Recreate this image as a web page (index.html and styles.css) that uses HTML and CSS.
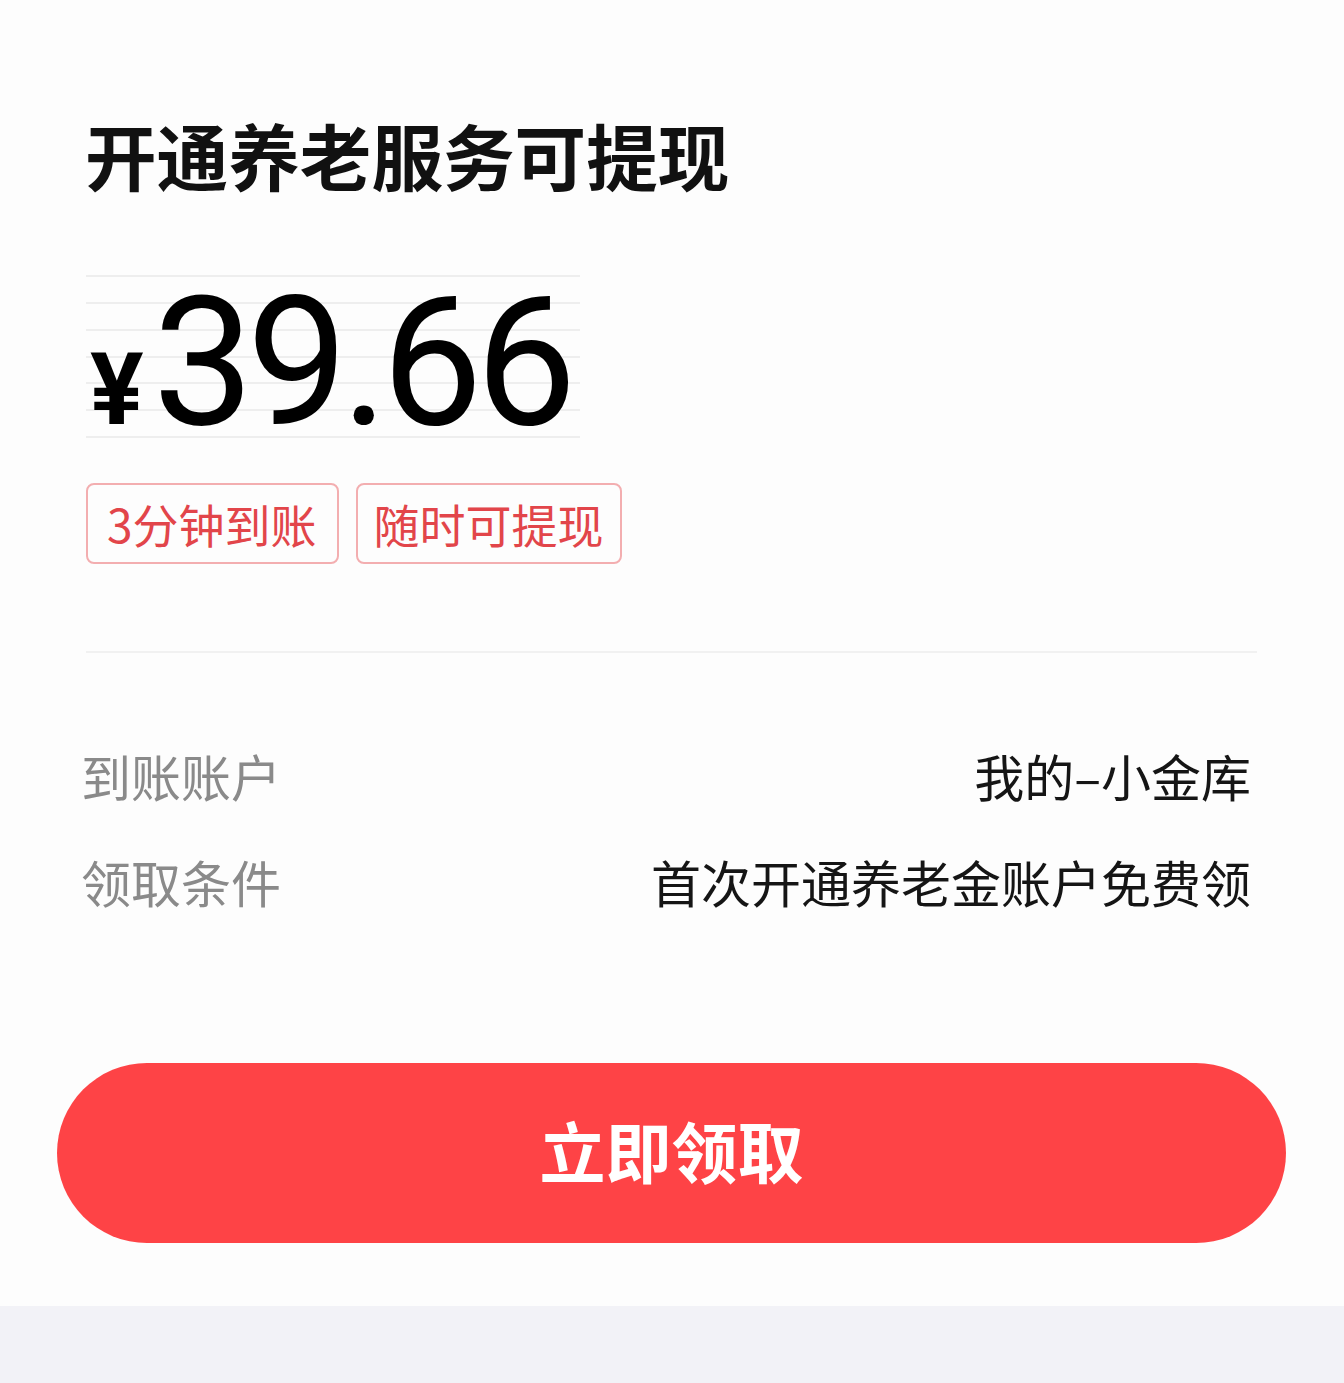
FILE: index.html
```html
<!DOCTYPE html>
<html lang="zh-CN">
<head>
<meta charset="utf-8">
<title>开通养老服务可提现</title>
<link rel="stylesheet" href="styles.css">
</head>
<body>
<main class="card">
  <h1 class="title">开通养老服务可提现</h1>
  <div class="amount"><span class="yen">¥</span><span class="num">39.66</span></div>
  <div class="tags">
    <span class="tag">3分钟到账</span>
    <span class="tag">随时可提现</span>
  </div>
  <div class="divider"></div>
  <div class="info">
    <div class="row"><span class="label">到账账户</span><span class="value">我的–小金库</span></div>
    <div class="row"><span class="label">领取条件</span><span class="value">首次开通养老金账户免费领</span></div>
  </div>
  <button class="cta" type="button">立即领取</button>
</main>
<div class="band"></div>
</body>
</html>
```
FILE: styles.css
```css
html, body {
  margin: 0;
  padding: 0;
}
body {
  width: 1344px;
  height: 1383px;
  background: #f2f2f7;
  font-family: "Noto Sans CJK SC", "Noto Sans", sans-serif;
  overflow: hidden;
}
.card {
  box-sizing: border-box;
  height: 1306px;
  background: #fdfdfd;
  padding: 118px 87px 0 86px;
  display: flex;
  flex-direction: column;
}
.title {
  margin: 0 0 0 -1px;
  font-size: 71.6px;
  line-height: 72px;
  font-weight: 700;
  color: #111;
}
.amount {
  margin-top: 85px;
  width: 494px;
  height: 163px;
  display: flex;
  align-items: baseline;
  background: repeating-linear-gradient(to bottom, #eeeeee 0, #eeeeee 2px, transparent 2px, transparent 26.85px);
}
.yen {
  font-family: Roboto, "Liberation Sans", sans-serif;
  font-weight: 700;
  font-size: 100px;
  line-height: 160px;
  color: #000;
  margin-left: 4px;
  margin-right: 9px;
}
.num {
  font-family: Roboto, "Liberation Sans", sans-serif;
  font-weight: 400;
  font-size: 180px;
  line-height: 175px;
  letter-spacing: -7px;
  color: #000;
}
.tags {
  margin-top: 45px;
  display: flex;
  gap: 17px;
}
.tag {
  box-sizing: border-box;
  height: 81px;
  padding: 0 16px;
  border: 2px solid #f3aeb0;
  border-radius: 8px;
  color: #e2454a;
  font-size: 46px;
  line-height: 77px;
}
.tag:first-child {
  padding: 0 20px 0 19px;
}
.divider {
  margin-top: 87px;
  height: 2px;
  background: #f1f1f1;
}
.info {
  margin-top: 69px;
  display: flex;
  flex-direction: column;
}
.row {
  height: 106px;
  display: flex;
  justify-content: space-between;
  align-items: center;
  font-size: 50px;
  line-height: 106px;
}
.label {
  color: #8a8a8a;
  margin-left: -5px;
}
.value {
  color: #151515;
  margin-right: 6px;
}
.cta {
  margin: 129px -29px 0;
  height: 180px;
  border: none;
  border-radius: 90px;
  background: #fe4346;
  color: #fff;
  font-family: "Noto Sans CJK SC", "Noto Sans", sans-serif;
  font-size: 66px;
  font-weight: 700;
  padding: 0 0 8px;
}
.band {
  height: 77px;
  background: #f2f2f7;
}
```
